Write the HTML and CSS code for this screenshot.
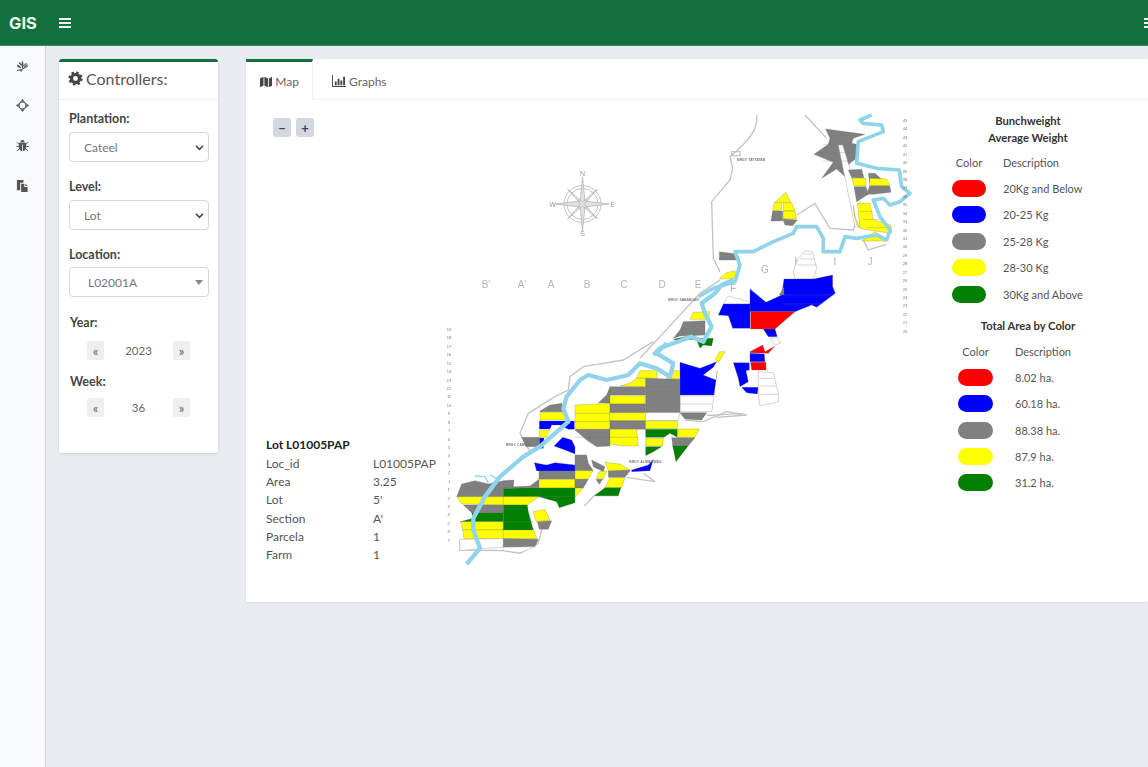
FILE: index.html
```html
<!DOCTYPE html>
<html lang="en">
<head>
  <meta charset="UTF-8">
  <title>GIS</title>
  <link rel="stylesheet" href="styles.css">
</head>
<body>
  <header class="topbar">
    <div class="brand">GIS</div>
    <svg class="burger" viewBox="0 0 12 10"><path d="M0 0h12v2H0zM0 4h12v2H0zM0 8h12v2H0z"/></svg>
    <svg class="burger burger-right" viewBox="0 0 12 10"><path d="M0 0h12v2H0zM0 4h12v2H0zM0 8h12v2H0z"/></svg>
  </header>

  <div class="layout">
    <nav class="sidebar">
      <svg class="side-icon" viewBox="0 0 14 14">
        <path d="M1 12.500C5 11.500 9 10.500 13 7.500" class="stem"/>
        <path d="M6.500 10.500 6 5 7 1 8 5 7.800 9.500zM5.500 10 1.500 8.500 1 6 4.500 7.500zM5.800 7.500 3 4.500 3.200 3 6 5.500zM8 9l4-3.500.8 1-3.500 3zM7.800 7l3.200-3 .6.8-3 3zM3 12.500l4-1-1 2.300z"/>
      </svg>
      <svg class="side-icon" viewBox="0 0 14 14">
        <circle cx="7" cy="7" r="3.800" class="ring"/>
        <path d="M7 0l2.200 2.800H4.800zM7 14l-2.200-2.800h4.400zM0 7l2.800-2.200v4.400zM14 7l-2.800 2.200V4.800z"/>
      </svg>
      <svg class="side-icon" viewBox="0 0 14 14">
        <path d="M4.600 3.400C5 1.900 6 1.200 7 1.200s2 .7 2.400 2.200zM3.800 4h6.400c.6 0 .8.6.8 1.200V9c0 2.400-1.600 4-3.600 4.200V6H6.600v7.200C4.600 13 3 11.400 3 9V5.200C3 4.600 3.200 4 3.800 4z"/>
        <path d="M3 5 .8 3.500M11 5l2.200-1.500M3 8H.4M11 8h2.600M3.400 10.800 1 12.800M10.600 10.800l2.400 2" class="stem"/>
      </svg>
      <svg class="side-icon" viewBox="0 0 14 14">
        <path d="M1 1h7v3H5.500C4.700 4 4.500 4.500 4.500 5v7H1z"/>
        <path d="M5.500 5H9v3.500h3.500V14h-7zM10 5l2.500 2.500H10z"/>
      </svg>
    </nav>

    <main class="content">
      <section class="controls">
        <h3 class="controls-title">
          <svg class="gear" viewBox="0 0 16 16">
            <circle cx="8" cy="8" r="4.300" class="gear-ring"/>
            <circle cx="8" cy="8" r="6.400" class="gear-teeth"/>
          </svg>
          Controllers:
        </h3>
        <div class="controls-body">
          <label class="field-label">Plantation:</label>
          <select class="field-select"><option>Cateel</option></select>

          <label class="field-label">Level:</label>
          <select class="field-select"><option>Lot</option></select>

          <label class="field-label location-label">Location:</label>
          <div class="search-select">
            <span>L02001A</span>
            <i class="caret"></i>
          </div>

          <label class="field-label step-label">Year:</label>
          <div class="stepper">
            <button class="step-btn">«</button>
            <span class="step-value">2023</span>
            <button class="step-btn">»</button>
          </div>

          <label class="field-label week-label">Week:</label>
          <div class="stepper">
            <button class="step-btn">«</button>
            <span class="step-value">36</span>
            <button class="step-btn">»</button>
          </div>
        </div>
      </section>

      <section class="panel">
        <div class="tabs">
          <a class="tab tab-active">
            <svg class="tab-icon" viewBox="0 0 14 13"><path d="M0 2.500 4 .5V10.500L0 12.500zM5 .5 9 2.500V12.500L5 10.500zM10 2.500 14 .5V10.500L10 12.500z"/></svg>
            Map
          </a>
          <a class="tab tab-graphs">
            <svg class="tab-icon" viewBox="0 0 15 13"><path d="M0 0h1v12h14v1H0zM3 7h2v4H3zM6 4h2v7H6zM9 6h2v5H9zM12 2h2v9h-2z"/></svg>
            Graphs
          </a>
        </div>

        <div class="panel-body">
          <div class="map-canvas">
            <svg class="map" viewBox="246 100 684 502" width="684" height="502">
              <g class="section-labels">
                <text x="486" y="288">B'</text>
                <text x="522" y="288">A'</text>
                <text x="551" y="288">A</text>
                <text x="587" y="288">B</text>
                <text x="624" y="288">C</text>
                <text x="662" y="288">D</text>
                <text x="698" y="288">E</text>
                <text x="733" y="292">F</text>
                <text x="765" y="273">G</text>
                <text x="798" y="265">H</text>
                <text x="835" y="265">I</text>
                <text x="870" y="265">J</text>
              </g>

              <!-- farm north of the river, traced in 3x crop coordinates -->
              <g transform="translate(660 105) scale(.3333)">
                <path class="road" d="M290 30C295 70 270 105 210 155L218 190 210 225 155 290 160 460 180 500M435 30 500 100M410 330 465 295 510 370 580 375 590 340 585 290M610 405 625 435 680 418"/>
                <path class="road" d="M215 140h25v12h-25z"/>
                <polygon class="gy" points="497,72 615,88 580,100 575,115 590,118 597,155 575,170 555,190 555,215 530,192 485,220 520,172 462,148 505,118 510,100"/>
                <polygon class="wh" points="535,120 548,120 600,290 600,368 585,365"/>
                <polygon class="gy" points="565,195 605,193 612,218 575,218"/>
                <polygon class="ye" points="575,220 618,220 618,243 582,243"/>
                <polygon class="gy" points="582,245 618,245 625,268 590,290"/>
                <polygon class="gy" points="625,205 645,205 690,245 693,262 640,268 620,268 630,240"/>
                <polygon class="ye" points="630,220 680,222 690,242 628,242"/>
                <polygon class="ye" points="592,295 630,295 640,345 692,360 695,385 625,375 600,370"/>
                <polygon class="ye" points="580,300 590,360 598,365 582,330"/>
                <polygon class="ye" points="605,408 645,380 685,408"/>
                <path class="cell-line" d="M600 320h40M610 343h60M620 368h75M510 92h75M490 118h100M470 143h125M490 168h90"/>

                <polygon class="ye" points="345,292 378,262 392,292"/>
                <polygon class="ye" points="342,293 365,293 365,315 338,318"/>
                <polygon class="ye" points="370,293 395,293 405,317 370,317"/>
                <polygon class="ye" points="370,318 405,318 410,342 370,342"/>
                <polygon class="gy" points="338,318 368,318 368,348 333,348"/>
                <polygon class="gy" points="368,342 412,345 398,362 375,360"/>

                <polygon class="gy" points="178,440 230,447 240,465 178,465"/>
                <polygon class="ye" points="178,520 200,503 225,497 235,520 180,522"/>

                <polygon class="wh" points="400,500 412,465 435,437 458,440 470,490 460,522 405,522"/>
                <path class="cell-line cell-line-light" d="M412 480h58M420 462h45M432 447h25"/>
                <polygon class="wh" points="190,597 205,573 265,590 270,597"/>
                <polygon class="bl" points="270,552 318,592 365,570 372,522 460,522 518,510 518,545 526,565 470,607 455,600 405,620 270,620"/>
                <polygon class="gy" points="358,570 372,545 372,570"/>
                <polygon class="bl" points="190,597 270,597 270,670 218,670 205,632 175,630"/>
                <polygon class="re" points="272,620 405,620 345,672 272,672"/>
                <polygon class="bl" points="310,672 345,672 352,695 325,695"/>
                <polygon class="wh" points="330,700 352,695 362,715 345,720"/>
                <path class="cell-line" d="M372 570H525M372 597H490"/>

                <path class="river" d="M115 575 160 550 225 530 240 480 225 440 280 440 340 410 400 385 410 365 470 365 490 400 490 440 540 440 555 395 590 400 650 390 680 405"/>
                <path class="river" d="M680 405 690 375 660 335 640 285 670 280 690 300 720 290 750 265 725 245 718 195 650 190 590 175 595 110 670 80 665 60 610 55 600 45 635 30"/>

                <text class="tiny" x="232" y="168">BRGY. TAYTAYAN</text>
              </g>

              <!-- middle farm -->
              <g transform="translate(640 280) scale(.3333)">
                <polygon class="ye" points="160,97 210,95 205,118 150,118"/>
                <polygon class="gy" points="130,125 195,122 195,165 120,168 100,175 120,150"/>
                <polygon class="gn" points="100,178 135,170 165,165 165,178 115,182"/>
                <polygon class="gn" points="168,175 220,175 215,198 190,195 180,205"/>
                <polygon class="ye" points="238,215 255,215 235,248 225,240"/>
                <polygon class="bl" points="120,247 180,265 230,245 220,262 190,285 228,300 232,272 222,345 120,345"/>
                <polygon class="wh" points="120,348 222,348 215,395 120,395"/>
                <polygon class="gy" points="120,398 200,398 185,420 135,418"/>
                <polygon class="re" points="330,215 368,195 375,215 405,198 385,220 330,218"/>
                <polygon class="bl" points="330,220 373,222 375,245 330,245"/>
                <polygon class="re" points="332,247 378,247 378,270 335,270"/>
                <polygon class="bl" points="280,248 328,248 328,270 318,272 325,305 300,320 295,295"/>
                <polygon class="bl" points="305,322 355,322 352,342 320,338"/>
                <polygon class="wh" points="355,275 400,278 415,340 415,365 360,378 355,345"/>
                <path class="cell-line cell-line-light" d="M120 372h95M358 295h45M358 318h50M358 343h58"/>
                <path class="road" d="M0 235 180 40 240 0M200 405C240 410 270 395 318 405"/>
                <path class="river river-wide" d="M40 225 60 205 100 190 155 170 190 185 215 140 195 100 185 70 225 40 245 15 280 0"/>
                <text class="tiny" x="85" y="62">BRGY. SABANGAN</text>
              </g>

              <!-- south farm -->
              <g transform="translate(440 340) scale(.3333)">
                <path class="road" d="M640 5 550 60 430 80 390 110 385 150 345 170 265 220 240 280 270 335M830 232 920 225 860 215 790 245 735 240M60 600 60 630 190 632 240 640 295 610 310 550M433 498 463 467 535 467M560 412 645 425 610 400"/>
                <polygon class="gy" points="50,470 65,432 105,422 145,432 190,422 222,420 220,442 190,445 190,470"/>
                <polygon class="ye" points="50,470 190,470 190,495 65,492"/>
                <polygon class="gy" points="70,495 190,495 190,518 95,518"/>
                <polygon class="gn" points="95,518 190,518 190,545 60,545 100,535"/>
                <polygon class="ye" points="62,545 190,545 190,570 68,570"/>
                <polygon class="ye" points="68,570 190,570 190,596 72,596"/>
                <polygon class="wh" points="58,598 190,596 190,622 130,625 60,632"/>
                <polygon class="gn" points="190,445 297,443 297,470 190,470"/>
                <polygon class="ye" points="190,470 297,470 262,495 190,495"/>
                <polygon class="gn" points="190,495 262,495 265,515 280,570 190,570"/>
                <polygon class="ye" points="190,570 280,570 292,596 190,596"/>
                <polygon class="gy" points="190,596 295,598 285,620 190,622"/>
                <polygon class="wh" points="190,622 285,620 240,638 190,632"/>
                <polygon class="gy" points="222,440 270,438 297,418 297,443 190,445"/>
                <polygon class="bl" points="283,368 320,375 345,368 405,375 405,393 290,393"/>
                <polygon class="gy" points="297,393 405,393 405,418 297,418"/>
                <polygon class="ye" points="297,418 405,418 405,444 297,444"/>
                <polygon class="gn" points="297,444 405,444 405,488 358,503 350,485 297,470"/>
                <polygon class="gy" points="405,345 440,345 445,370 460,392 405,392"/>
                <polygon class="ye" points="405,392 458,392 445,418 405,418"/>
                <polygon class="gy" points="405,418 445,418 430,444 405,444"/>
                <polygon class="ye" points="405,444 430,444 405,472"/>
                <polygon class="ye" points="280,515 315,508 330,540 288,545"/>
                <polygon class="gy" points="292,545 335,542 325,568 298,568"/>
                <polygon class="ye" points="495,367 540,372 570,390 505,393"/>
                <polygon class="gy" points="505,393 572,390 555,412 505,412"/>
                <polygon class="ye" points="510,413 555,413 545,443 495,443"/>
                <polygon class="gn" points="495,443 543,443 535,467 463,467"/>
                <polygon class="bl" points="575,390 625,375 640,358 630,392 575,395"/>
                <polygon class="gy" points="455,360 495,380 490,395 460,380"/>
                <polygon class="ye" points="478,395 500,393 490,418 470,415"/>
                <polygon class="gy" points="468,418 488,418 478,433"/>
                <polygon class="gy" points="300,213 330,195 365,190 372,215 300,215"/>
                <polygon class="ye" points="300,217 380,217 375,240 300,240"/>
                <polygon class="bl" points="298,243 375,243 403,243 403,268 385,268 360,255 335,255 330,267 298,267"/>
                <polygon class="ye" points="298,270 328,270 320,292 298,292"/>
                <polygon class="bl" points="298,294 312,294 310,325 298,325"/>
                <polygon class="gy" points="245,292 298,292 298,320 258,320"/>
                <polygon class="bl" points="342,318 368,292 395,300 405,320 405,342 375,330"/>
                <polygon class="gy" points="475,188 500,165 510,140 510,190"/>
                <polygon class="ye" points="405,195 470,192 510,190 510,268 405,268"/>
                <polygon class="gy" points="408,268 510,268 510,318 470,320 440,300 405,270"/>
                <polygon class="gy" points="510,140 617,140 617,165 510,165"/>
                <polygon class="ye" points="510,167 615,167 615,192 510,192"/>
                <polygon class="gy" points="510,192 617,192 617,218 510,218"/>
                <polygon class="ye" points="510,218 617,218 617,242 510,242"/>
                <polygon class="gy" points="510,242 617,242 617,268 510,268"/>
                <polygon class="ye" points="510,268 590,268 595,318 548,318 510,312"/>
                <polygon class="ye" points="540,138 570,130 590,115 617,115 617,140"/>
                <polygon class="ye" points="600,92 650,92 652,115 590,113"/>
                <polygon class="ye" points="690,92 720,92 720,116 680,116"/>
                <polygon class="gy" points="617,115 720,118 720,218 617,218"/>
                <polygon class="wh" points="617,218 720,218 715,242 617,242"/>
                <polygon class="ye" points="617,243 712,243 712,266 617,266"/>
                <polygon class="gn" points="617,268 712,268 712,292 690,280 672,292 617,292"/>
                <polygon class="ye" points="617,295 670,295 668,318 617,318"/>
                <polygon class="gn" points="617,320 665,320 640,335 617,347"/>
                <polygon class="ye" points="715,267 778,267 765,292 712,292"/>
                <polygon class="gy" points="695,293 765,293 745,317 698,317"/>
                <polygon class="gn" points="698,317 745,317 708,365"/>
                <path class="cell-line" d="M60 445H190M405 220H510M405 245H510M510 292H595M617 140H720M617 165H720M617 192H720M190 545H280M297 470H405M405 292H510"/>
                <path class="river river-wide" d="M80 672 120 625 100 570 100 535 135 470 180 410 250 350 300 320 385 245 370 205 380 170 420 120 445 105 500 120 565 105 600 70 650 85 690 110 700 70 650 40 680 10"/>
                <path class="river river-thin" d="M105 408 135 410 145 430M150 405 170 415"/>
                <text class="tiny" x="198" y="318">BRGY. CABUGAO</text>
                <text class="tiny" x="568" y="368">BRGY. ALIWAGWAG</text>
              </g>

              <!-- compass -->
              <g class="compass" transform="translate(582.500 204)">
                <circle r="18.500"/>
                <circle r="15.500"/>
                <path d="M0-27 2.500-3 27 0 2.500 3 0 27-2.500 3-27 0-2.500-3zM-15-15 0-2 15-15 2 0 15 15 0 2-15 15-2 0z"/>
                <text class="compass-letter" y="-28">N</text>
                <text class="compass-letter" y="32">S</text>
                <text class="compass-letter" x="-30" y="2.500">W</text>
                <text class="compass-letter" x="30" y="2.500">E</text>
              </g>

              <g class="ticks" id="ticks"></g>
            </svg>

            <div class="zoom-btns">
              <button class="zoom-btn">−</button>
              <button class="zoom-btn">+</button>
            </div>

            <table class="lot-info">
              <caption>Lot L01005PAP</caption>
              <tr><td>Loc_id</td><td>L01005PAP</td></tr>
              <tr><td>Area</td><td>3.25</td></tr>
              <tr><td>Lot</td><td>5'</td></tr>
              <tr><td>Section</td><td>A'</td></tr>
              <tr><td>Parcela</td><td>1</td></tr>
              <tr><td>Farm</td><td>1</td></tr>
            </table>
          </div>

          <aside class="legend">
            <h4 class="legend-title">Bunchweight<br>Average Weight</h4>
            <div class="legend-grid legend-first">
              <span class="legend-head">Color</span><span class="legend-head">Description</span>
              <i class="pill re-bg"></i><span>20Kg and Below</span>
              <i class="pill bl-bg"></i><span>20-25 Kg</span>
              <i class="pill gy-bg"></i><span>25-28 Kg</span>
              <i class="pill ye-bg"></i><span>28-30 Kg</span>
              <i class="pill gn-bg"></i><span>30Kg and Above</span>
            </div>
            <h4 class="legend-title legend-title-two">Total Area by Color</h4>
            <div class="legend-grid legend-second">
              <span class="legend-head">Color</span><span class="legend-head">Description</span>
              <i class="pill re-bg"></i><span>8.02 ha.</span>
              <i class="pill bl-bg"></i><span>60.18 ha.</span>
              <i class="pill gy-bg"></i><span>88.38 ha.</span>
              <i class="pill ye-bg"></i><span>87.9 ha.</span>
              <i class="pill gn-bg"></i><span>31.2 ha.</span>
            </div>
          </aside>
        </div>
      </section>
    </main>
  </div>

  <script>
    // row and column numbers along the map edges
    const svgNS = 'http://www.w3.org/2000/svg';
    const ticks = document.getElementById('ticks');

    function addTick(x, y, label) {
      const t = document.createElementNS(svgNS, 'text');
      t.setAttribute('x', x);
      t.setAttribute('y', y);
      t.textContent = label;
      ticks.appendChild(t);
    }

    for (let n = 45, y = 122; n >= 20; n--, y += 8.43) {
      addTick(905, y, n);
    }

    const leftLabels = [];
    for (let n = 19; n >= 1; n--) leftLabels.push(String(n));
    for (let n = 1; n <= 7; n++) leftLabels.push(n + "'");
    leftLabels.forEach((label, i) => addTick(449, 331 + i * 8.43, label));
  </script>
</body>
</html>
```

FILE: styles.css
```css
* {
  box-sizing: border-box;
}

html, body {
  height: 100%;
}

body {
  margin: 0;
  overflow: hidden;
  background-color: #e9edf2;
  color: #4a4a4a;
  font-family: "Lato", "Noto Sans", sans-serif;
  font-size: 12px;
}

.topbar {
  display: flex;
  align-items: center;
  height: 46px;
  padding-left: 9px;
  background-color: #13703e;
  border-bottom: 1px solid #3d8a60;
}

.brand {
  width: 50px;
  color: #eafaf0;
  font-family: "Inter", sans-serif;
  font-size: 16.5px;
  font-weight: 700;
}

.burger {
  width: 12px;
  height: 10px;
  fill: #eef8f2;
}

.burger-right {
  margin-left: auto;
  margin-right: -8px;
}

.layout {
  display: flex;
  height: 721px;
}

.sidebar {
  display: flex;
  flex-direction: column;
  align-items: center;
  gap: 27px;
  width: 46px;
  padding-top: 13px;
  padding-right: 1px;
  background-color: #f8fafc;
  border-right: 1px solid #c6d2e2;
}

.side-icon {
  width: 13px;
  height: 13px;
  fill: #555;
}

.stem {
  fill: none;
  stroke: #555;
  stroke-width: 1;
}

.ring {
  fill: none;
  stroke: #555;
  stroke-width: 1.4;
}

.content {
  display: flex;
  align-items: flex-start;
  gap: 28px;
  flex: 1;
  min-width: 0;
  padding: 13px 0 0 13px;
}

.controls {
  flex: none;
  width: 159px;
  height: 394px;
  background-color: #fff;
  border-top: 3px solid #13703e;
  border-radius: 3px;
  box-shadow: 0 1px 3px rgba(0, 0, 0, 0.12);
}

.controls-title {
  display: flex;
  align-items: center;
  gap: 3px;
  height: 38px;
  margin: 0;
  padding: 0 0 4px 9px;
  color: #555;
  font-size: 16px;
  font-weight: 400;
  border-bottom: 1px solid #f1f3f5;
}

.gear {
  width: 15px;
  height: 15px;
}

.gear-ring {
  fill: none;
  stroke: #444;
  stroke-width: 3.4;
}

.gear-teeth {
  fill: none;
  stroke: #444;
  stroke-width: 2.4;
  stroke-dasharray: 2.6 2.42;
}

.controls-body {
  padding: 11px 10px;
}

.field-label {
  display: block;
  height: 16px;
  margin-bottom: 5px;
  color: #444;
  font-size: 12.5px;
  font-weight: 700;
  line-height: 16px;
}

.location-label {
  margin-bottom: 4px;
}

.field-select,
.search-select {
  display: block;
  width: 140px;
  height: 30px;
  margin-bottom: 17px;
  padding-left: 14px;
  background-color: #fff;
  border: 1px solid #d4d7db;
  border-radius: 4px;
  color: #777;
  font: inherit;
}

.field-select {
  appearance: none;
  background-image: url("data:image/svg+xml,%3Csvg xmlns='http://www.w3.org/2000/svg' viewBox='0 0 10 7'%3E%3Cpath d='M1 1.500 5 5.500 9 1.500' fill='none' stroke='%23444' stroke-width='1.800'/%3E%3C/svg%3E");
  background-repeat: no-repeat;
  background-position: right 4px center;
  background-size: 9px 7px;
}

.search-select {
  display: flex;
  align-items: center;
  justify-content: space-between;
  margin-bottom: 18px;
  padding: 0 5px 0 18px;
}

.caret {
  width: 0;
  height: 0;
  border-left: 4px solid transparent;
  border-right: 4px solid transparent;
  border-top: 5px solid #888;
}

.step-label,
.week-label {
  margin-left: 1px;
}

.step-label {
  margin-bottom: 10px;
}

.week-label {
  margin-top: 14px;
  margin-bottom: 8px;
}

.stepper {
  display: flex;
  align-items: center;
  justify-content: space-between;
  width: 103px;
  margin-left: 18px;
}

.step-btn {
  width: 17px;
  height: 19px;
  padding: 0;
  background-color: #efefef;
  border: 0;
  border-radius: 2px;
  color: #666;
  font: inherit;
  font-size: 13px;
}

.step-value {
  color: #666;
  font-size: 11.5px;
}

.panel {
  flex: 1;
  min-width: 0;
  height: 543px;
  background-color: #fff;
  border-radius: 2px;
  box-shadow: 0 1px 2px rgba(0, 0, 0, 0.08);
}

.tabs {
  display: flex;
  height: 41px;
  border-bottom: 1px solid #f1f3f5;
}

.tab {
  display: flex;
  align-items: center;
  gap: 3px;
  padding: 1px 13px 0;
  color: #666;
  border-top: 3px solid transparent;
}

.tab-active {
  width: 67px;
  padding-left: 14px;
  border-top-color: #13703e;
  border-right: 1px solid #f1f3f5;
  margin-bottom: -1px;
  background-color: #fff;
}

.tab-graphs {
  padding-left: 19px;
}

.tab-icon {
  width: 14px;
  height: 12px;
  fill: #444;
}

.panel-body {
  display: flex;
  height: 502px;
}

.map-canvas {
  position: relative;
  flex: none;
  width: 684px;
  height: 502px;
}

.map {
  display: block;
  filter: blur(0.35px);
}

.gy { fill: #808080; }
.ye { fill: #ffff00; }
.bl { fill: #0000ff; }
.gn { fill: #008000; }
.re { fill: #ff0000; }
.wh { fill: #fff; }

.gy, .ye, .bl, .gn, .re {
  stroke: #666;
  stroke-width: 0.8;
}

.wh {
  stroke: #aaa;
  stroke-width: 1.5;
}

.cell-line {
  fill: none;
  stroke: #777;
  stroke-width: 0.9;
}

.cell-line-light {
  stroke: #aaa;
  stroke-width: 1.5;
}

.road {
  fill: none;
  stroke: #c4c4c4;
  stroke-width: 4;
}

.river {
  fill: none;
  stroke: #8fd4ea;
  stroke-width: 11;
  stroke-linejoin: round;
}

.river-wide {
  stroke-width: 13;
}

.river-thin {
  stroke-width: 4;
}

.tiny {
  fill: #777;
  font-family: "Liberation Sans", sans-serif;
  font-size: 10px;
  font-weight: 700;
}

.compass circle {
  fill: none;
  stroke: #aaa;
  stroke-width: 0.7;
}

.compass path {
  fill: #e2e2e2;
  stroke: #999;
  stroke-width: 0.5;
}

.compass-letter {
  fill: #999;
  font-family: "Liberation Sans", sans-serif;
  font-size: 7px;
  text-anchor: middle;
}

.section-labels text {
  fill: #b5b5b5;
  font-family: "Liberation Sans", sans-serif;
  font-size: 10px;
  text-anchor: middle;
}

.ticks text {
  fill: #777;
  font-family: "Liberation Sans", sans-serif;
  font-size: 4px;
  text-anchor: middle;
}

.zoom-btns {
  position: absolute;
  top: 18px;
  left: 27px;
  display: flex;
  gap: 5px;
}

.zoom-btn {
  width: 18px;
  height: 19px;
  padding: 0;
  background-color: #d3d7e0;
  border: 0;
  border-radius: 3px;
  color: #444;
  font-family: "Lato", sans-serif;
  font-size: 13px;
  font-weight: 700;
}

.lot-info {
  position: absolute;
  top: 337px;
  left: 20px;
  border-collapse: collapse;
  color: #555;
}

.lot-info caption {
  height: 17px;
  color: #222;
  font-weight: 700;
  line-height: 16px;
  text-align: left;
}

.lot-info td {
  height: 18.3px;
  padding: 0;
}

.lot-info td:first-child {
  width: 107px;
}

.legend {
  flex: 1;
  min-width: 0;
  padding-top: 13px;
  color: #555;
  font-size: 11px;
}

.legend-title {
  width: 196px;
  margin: 0;
  color: #333;
  font-size: 11.2px;
  font-weight: 700;
  line-height: 16.5px;
  text-align: center;
}

.legend-title-two {
  margin-top: 11px;
}

.legend-grid {
  display: grid;
  align-items: center;
  justify-items: start;
  grid-auto-rows: 26.4px;
  margin-top: 3px;
}

.legend-first {
  grid-template-columns: 34px auto;
  column-gap: 17px;
  margin-left: 22px;
}

.legend-second {
  grid-template-columns: 35px auto;
  column-gap: 22px;
  margin-left: 28px;
}

.legend-head {
  justify-self: center;
}

.legend-head:nth-child(2) {
  justify-self: start;
}

.pill {
  display: block;
  width: 100%;
  height: 17px;
  border-radius: 9px;
}

.re-bg { background-color: #ff0000; }
.bl-bg { background-color: #0000ff; }
.gy-bg { background-color: #808080; }
.ye-bg { background-color: #ffff00; }
.gn-bg { background-color: #008000; }
```
